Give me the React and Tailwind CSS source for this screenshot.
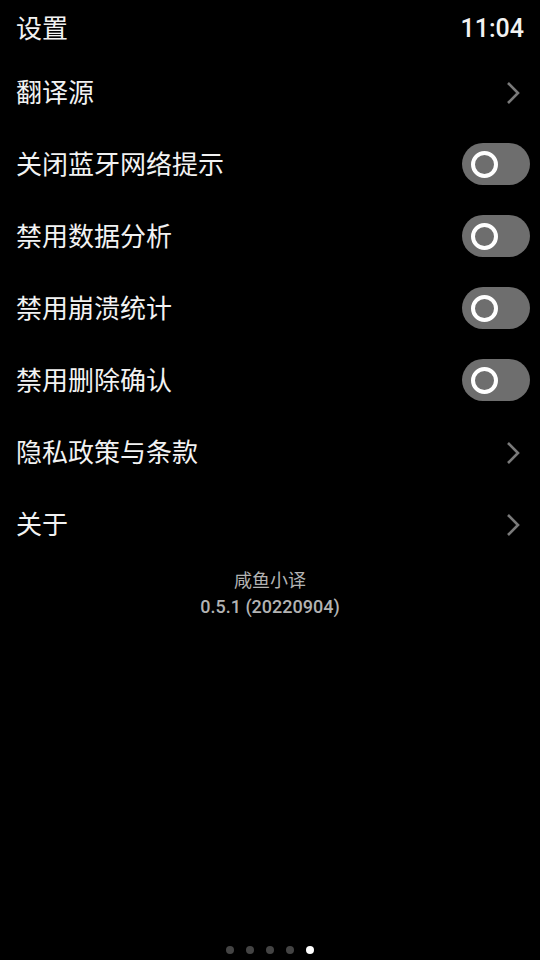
import React from "react";

const font = { fontFamily: '"Noto Sans CJK SC", Roboto, "Noto Sans", sans-serif' };

function Chevron() {
  return (
    <svg width="14" height="24" viewBox="0 0 14 24" className="mr-[4px]">
      <path d="M2 2 L12 12 L2 22" fill="none" stroke="#7a7a7a" strokeWidth="2.6" strokeLinecap="butt" strokeLinejoin="miter" />
    </svg>
  );
}

function Toggle() {
  return (
    <div className="w-[68px] h-[42px] rounded-full bg-[#6e6e6e] flex items-center pl-[9px] -mr-[6px] -mt-[2px]">
      <div className="w-[27px] h-[27px] rounded-full border-[4px] border-white" />
    </div>
  );
}

const rows = [
  { t: "翻译源", k: "c" },
  { t: "关闭蓝牙网络提示", k: "t" },
  { t: "禁用数据分析", k: "t" },
  { t: "禁用崩溃统计", k: "t" },
  { t: "禁用删除确认", k: "t" },
  { t: "隐私政策与条款", k: "c" },
  { t: "关于", k: "c" },
];

export default function App() {
  return (
    <div className="w-[540px] h-[960px] bg-black text-white flex flex-col overflow-hidden" style={font}>
      <div className="h-[57px] flex items-center justify-between px-4">
        <span className="text-[26px] leading-none text-[#f2f2f2] -mt-[4px]">设置</span>
        <span className="text-[25px] leading-none font-medium text-[#f2f2f2]" style={{ fontFamily: "Roboto, sans-serif" }}>11:04</span>
      </div>
      {rows.map((r) => (
        <div key={r.t} className="h-[72px] flex items-center justify-between pl-4 pr-4">
          <span className="text-[26px] leading-none text-[#f2f2f2] -mt-[4px]">{r.t}</span>
          {r.k === "c" ? <Chevron /> : <Toggle />}
        </div>
      ))}
      <div className="flex flex-col items-center mt-[5px] text-[#b3b3b3]">
        <span className="text-[18px] leading-[26px]">咸鱼小译</span>
        <span className="text-[18px] leading-[30px] font-medium" style={{ fontFamily: "Roboto, sans-serif" }}>0.5.1 (20220904)</span>
      </div>
      <div className="flex-1" />
      <div className="flex justify-center gap-[12px] mb-[6px] h-[8px]">
        <div className="w-[8px] h-[8px] rounded-full bg-[#444]" />
        <div className="w-[8px] h-[8px] rounded-full bg-[#444]" />
        <div className="w-[8px] h-[8px] rounded-full bg-[#444]" />
        <div className="w-[8px] h-[8px] rounded-full bg-[#444]" />
        <div className="w-[8px] h-[8px] rounded-full bg-white" />
      </div>
    </div>
  );
}
